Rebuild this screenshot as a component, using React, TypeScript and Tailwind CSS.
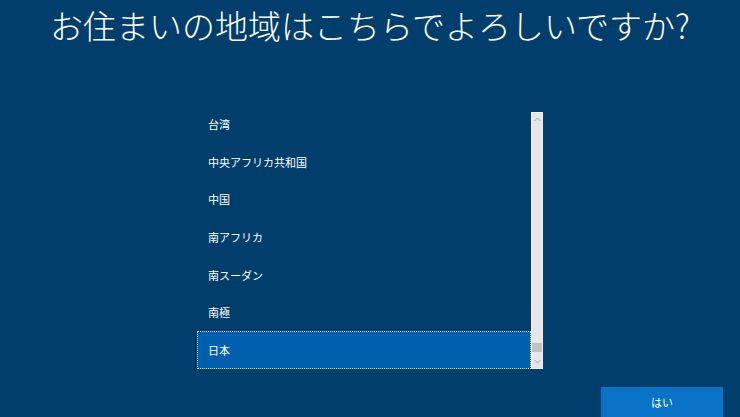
import React from "react";

const items = ["台湾", "中央アフリカ共和国", "中国", "南アフリカ", "南スーダン", "南極", "日本"];

export default function App() {
  return (
    <div className="w-[740px] h-[417px] bg-[#013e6b] overflow-hidden flex flex-col font-['Noto_Sans_CJK_JP','Noto_Sans',sans-serif]">
      <h1 className="h-[50px] leading-[50px] text-[33px] font-light text-white text-center tracking-[0px]">
        お住まいの地域はこちらでよろしいですか?
      </h1>
      <div className="mt-[62px] ml-[197px] flex w-[346px] h-[257px]">
        <div className="w-[334px] h-full overflow-hidden">
          <div className="-mt-[6.67px] flex flex-col">
            {items.map((t, i) => {
              const sel = i === items.length - 1;
              return (
                <div
                  key={t}
                  className={
                    sel
                      ? "h-[37.67px] flex items-center pl-[10px] text-[11px] text-white bg-[#005fae] border border-dotted border-[#d8e6f3]"
                      : "h-[37.67px] flex items-center pl-[11px] text-[11px] text-white"
                  }
                >
                  {t}
                </div>
              );
            })}
          </div>
        </div>
        <div className="w-[12px] h-full bg-[#e6e6e6] border border-[#f4f4f4] flex flex-col items-center">
          <svg width="7" height="5" viewBox="0 0 7 5" className="mt-[4px]">
            <path d="M0.5 4 L3.5 1 L6.5 4" fill="none" stroke="#a6a6a6" strokeWidth="1" />
          </svg>
          <div className="flex-1" />
          <div className="w-[10px] h-[9px] bg-[#c2c2c2] mb-[7px]" />
          <svg width="7" height="5" viewBox="0 0 7 5" className="mb-[4px]">
            <path d="M0.5 1 L3.5 4 L6.5 1" fill="none" stroke="#a6a6a6" strokeWidth="1" />
          </svg>
        </div>
      </div>
      <div className="mt-[18px] ml-[601px] w-[122px] h-[32px] bg-[#0a73c8] flex items-center justify-center text-[11px] text-white">
        はい
      </div>
    </div>
  );
}
